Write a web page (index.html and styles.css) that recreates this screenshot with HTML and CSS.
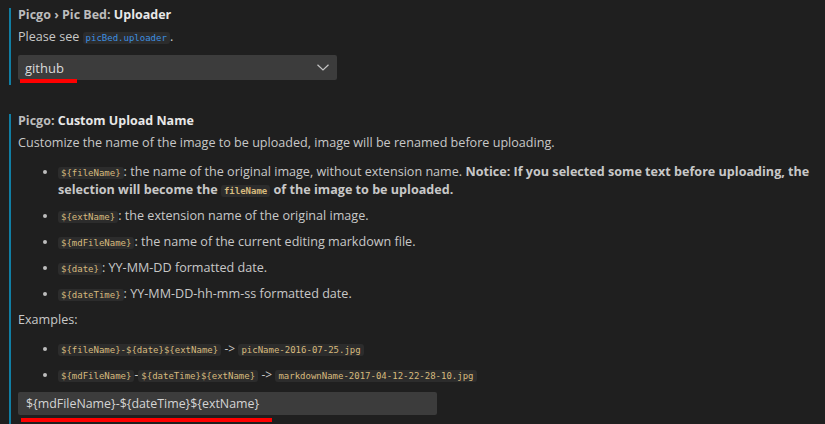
FILE: index.html
```html
<!DOCTYPE html>
<html>
<head>
<meta charset="utf-8">
<link rel="stylesheet" href="styles.css">
</head>
<body>
<div class="settings">
  <section class="setting s1">
    <div class="title"><span class="cat">Picgo › Pic Bed: </span><span class="name">Uploader</span></div>
    <p class="desc">Please see <code class="link">picBed.uploader</code>.</p>
    <div class="control">
      <div class="select">
        <span>github</span>
        <svg class="chev" width="12" height="7" viewBox="0 0 12 7"><path d="M0.5 0.8 L6 6 L11.5 0.8" fill="none" stroke="#c5c5c5" stroke-width="1.2"/></svg>
      </div>
      <div class="mark mark1"></div>
    </div>
  </section>
  <section class="setting s2">
    <div class="title"><span class="cat">Picgo: </span><span class="name">Custom Upload Name</span></div>
    <p class="desc">Customize the name of the image to be uploaded, image will be renamed before uploading.</p>
    <ul class="list">
      <li><code>${fileName}</code>: the name of the original image, without extension name. <b>Notice: If you selected some text before uploading, the selection will become the <code>fileName</code> of the image to be uploaded.</b></li>
      <li><code>${extName}</code>: the extension name of the original image.</li>
      <li><code>${mdFileName}</code>: the name of the current editing markdown file.</li>
      <li><code>${date}</code>: YY-MM-DD formatted date.</li>
      <li><code>${dateTime}</code>: YY-MM-DD-hh-mm-ss formatted date.</li>
    </ul>
    <p class="desc">Examples:</p>
    <ul class="list examples">
      <li><code>${fileName}-${date}${extName}</code> <span class="arrow">-&gt;</span> <code>picName-2016-07-25.jpg</code></li>
      <li><code>${mdFileName}</code><span class="dash">-</span><code>${dateTime}${extName}</code> <span class="arrow">-&gt;</span> <code>markdownName-2017-04-12-22-28-10.jpg</code></li>
    </ul>
    <div class="control">
      <div class="input">${mdFileName}-${dateTime}${extName}</div>
      <div class="mark mark2"></div>
    </div>
  </section>
</div>
</body>
</html>
```
FILE: styles.css
```css
html, body {
  margin: 0;
  padding: 0;
  background: #1f1f1f;
}
body {
  width: 825px;
  height: 424px;
  overflow: hidden;
  font-family: "Open Sans", "Noto Sans", sans-serif;
  font-size: 12.6px;
  color: #c8c8c8;
}
.settings {
  padding-left: 9px;
}
.setting {
  border-left: 2px solid #117ea3;
  padding-left: 7px;
}
.s1 {
  margin-top: 8px;
}
.s2 {
  margin-top: 29px;
}
.title {
  font-weight: 700;
  line-height: 14px;
  font-size: 12.5px;
}
.title .cat {
  color: #bdbdbd;
}
.title .name {
  color: #e8e8e8;
}
.desc {
  margin: 6px 0 0;
  line-height: 18px;
}
code {
  font-family: "DejaVu Sans Mono", monospace;
  font-size: 9px;
  line-height: 11px;
  color: #d7ba7d;
  background: #2c2c2c;
  border-radius: 3px;
  padding: 1px 3px;
}
code.link {
  color: #3d8fe0;
}
.control {
  position: relative;
}
.s1 .control {
  margin-top: 9px;
  padding-bottom: 5px;
}
.select {
  width: 319px;
  height: 25px;
  box-sizing: border-box;
  background: #3c3c3c;
  border-radius: 2px;
  display: flex;
  align-items: center;
  justify-content: space-between;
  padding: 0 8px 0 7px;
  color: #dadada;
  font-size: 13px;
}
.mark {
  position: absolute;
  background: #ff0000;
  height: 4px;
}
.mark1 {
  left: 2px;
  top: 24px;
  width: 57px;
}
.list {
  margin: 11px 0 0;
  padding-left: 40px;
}
.list li {
  line-height: 18px;
  margin-bottom: 8px;
}
.list li::marker {
  color: #bdbdbd;
  font-size: 11px;
}
.list b {
  font-weight: 700;
}
.examples li {
  margin-bottom: 8px;
}
.arrow, .dash {
  font-size: 12px;
}
.s2 .control {
  margin-top: 2px;
  padding-bottom: 10px;
}
.input {
  width: 419px;
  height: 23px;
  box-sizing: border-box;
  background: #3c3c3c;
  border-radius: 2px;
  padding: 0 8px;
  line-height: 23px;
  color: #d4d4d4;
  font-size: 12.4px;
}
.mark2 {
  left: 3px;
  top: 26px;
  width: 251px;
}
```
